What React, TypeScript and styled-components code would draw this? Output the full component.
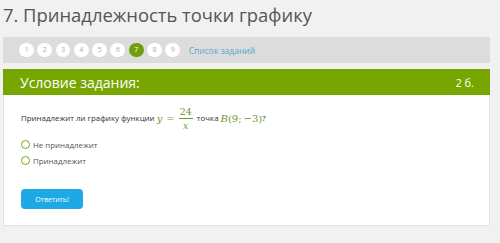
import styled, { createGlobalStyle } from "styled-components";

const GlobalStyle = createGlobalStyle`
  body {
    margin: 0;
    background: #f1f1f1;
    font-family: "Open Sans", "Liberation Sans", sans-serif;
  }
`;

const pages = [1, 2, 3, 4, 5, 6, 7, 8, 9];
const current = 7;

const App = () => {
  return (
    <Page>
      <GlobalStyle />
      <Title>7. Принадлежность точки графику</Title>
      <NavBar>
        {pages.map((n) => (
          <PageDot key={n} active={n === current}>
            {n}
          </PageDot>
        ))}
        <TaskLink>Список заданий</TaskLink>
      </NavBar>
      <Card>
        <CardHeader>
          <span>Условие задания:</span>
          <Points>2 б.</Points>
        </CardHeader>
        <CardBody>
          <Question>
            Принадлежит ли графику функции{" "}
            <MathExpr>
              <i>y</i>
              <Eq>=</Eq>
              <Frac>
                <Num>24</Num>
                <Den>
                  <i>x</i>
                </Den>
              </Frac>
            </MathExpr>
            <Gap />
            точка{" "}
            <MathExpr>
              <i>B</i>(9;&thinsp;−3)
            </MathExpr>
            ?
          </Question>
          <Options>
            <Option>
              <Radio />
              Не принадлежит
            </Option>
            <Option>
              <Radio />
              Принадлежит
            </Option>
          </Options>
          <AnswerButton>Ответить!</AnswerButton>
        </CardBody>
      </Card>
    </Page>
  );
};

const Page = styled.div`
  width: 500px;
  height: 243px;
  overflow: hidden;
  padding: 0 10px 0 3px;
  box-sizing: border-box;
`;

const Title = styled.h1`
  margin: 0;
  padding-top: 2px;
  height: 35px;
  font-size: 18.4px;
  font-weight: 400;
  color: #555;
  line-height: 26px;
`;

const NavBar = styled.div`
  display: flex;
  align-items: center;
  gap: 3.5px;
  height: 26px;
  background: #dcdcdc;
  padding-left: 16px;
`;

const PageDot = styled.div<{ active?: boolean }>`
  width: 14.8px;
  height: 14.8px;
  border-radius: 50%;
  background: ${({ active }) => (active ? "#6f9f0c" : "#fff")};
  color: ${({ active }) => (active ? "#fff" : "#8ab4d4")};
  font-size: 7px;
  display: flex;
  align-items: center;
  justify-content: center;
`;

const TaskLink = styled.span`
  margin-left: 5px;
  font-size: 8.5px;
  color: #5aa6d6;
`;

const Card = styled.div`
  margin-top: 6px;
  border: 1px solid #e3e3e3;
  border-top: none;
  background: #fff;
`;

const CardHeader = styled.div`
  display: flex;
  justify-content: space-between;
  align-items: center;
  height: 26px;
  background: #77a600;
  color: #fff;
  font-size: 14px;
  padding: 0 16px 0 17px;
  margin: 0 -1px;
`;

const Points = styled.span`
  font-size: 11px;
`;

const CardBody = styled.div`
  padding: 10px 17px 15px;
  height: 130px;
  box-sizing: border-box;
`;

const Question = styled.div`
  font-size: 7.9px;
  color: #333;
  display: flex;
  align-items: center;
  white-space: pre;
  height: 26px;
`;

const MathExpr = styled.span`
  font-family: "DejaVu Serif", "Liberation Serif", serif;
  color: #6d9a1e;
  font-size: 10px;
  display: inline-flex;
  align-items: center;
`;

const Gap = styled.span`
  width: 4px;
`;

const Eq = styled.span`
  margin: 0 4px;
  font-style: normal;
`;

const Frac = styled.span`
  display: inline-flex;
  flex-direction: column;
  align-items: center;
  font-size: 9.5px;
  line-height: 11px;
`;

const Num = styled.span`
  padding: 0 1px 1px;
  border-bottom: 1px solid #6d9a1e;
`;

const Den = styled.span`
  padding-top: 1px;
`;

const Options = styled.div`
  display: flex;
  flex-direction: column;
  gap: 5px;
  margin-top: 8px;
`;

const Option = styled.label`
  display: flex;
  align-items: center;
  gap: 3px;
  font-size: 7.9px;
  color: #555;
  height: 11px;
`;

const Radio = styled.span`
  width: 7px;
  height: 7px;
  border: 1.5px solid #7aa618;
  border-radius: 50%;
  background: #fff;
`;

const AnswerButton = styled.button`
  margin-top: 23px;
  width: 62px;
  height: 20px;
  border: none;
  border-radius: 4px;
  background: #1ca9e6;
  color: #fff;
  font-family: "Open Sans", "Liberation Sans", sans-serif;
  font-size: 7px;
  padding: 0;
`;

export default App;
